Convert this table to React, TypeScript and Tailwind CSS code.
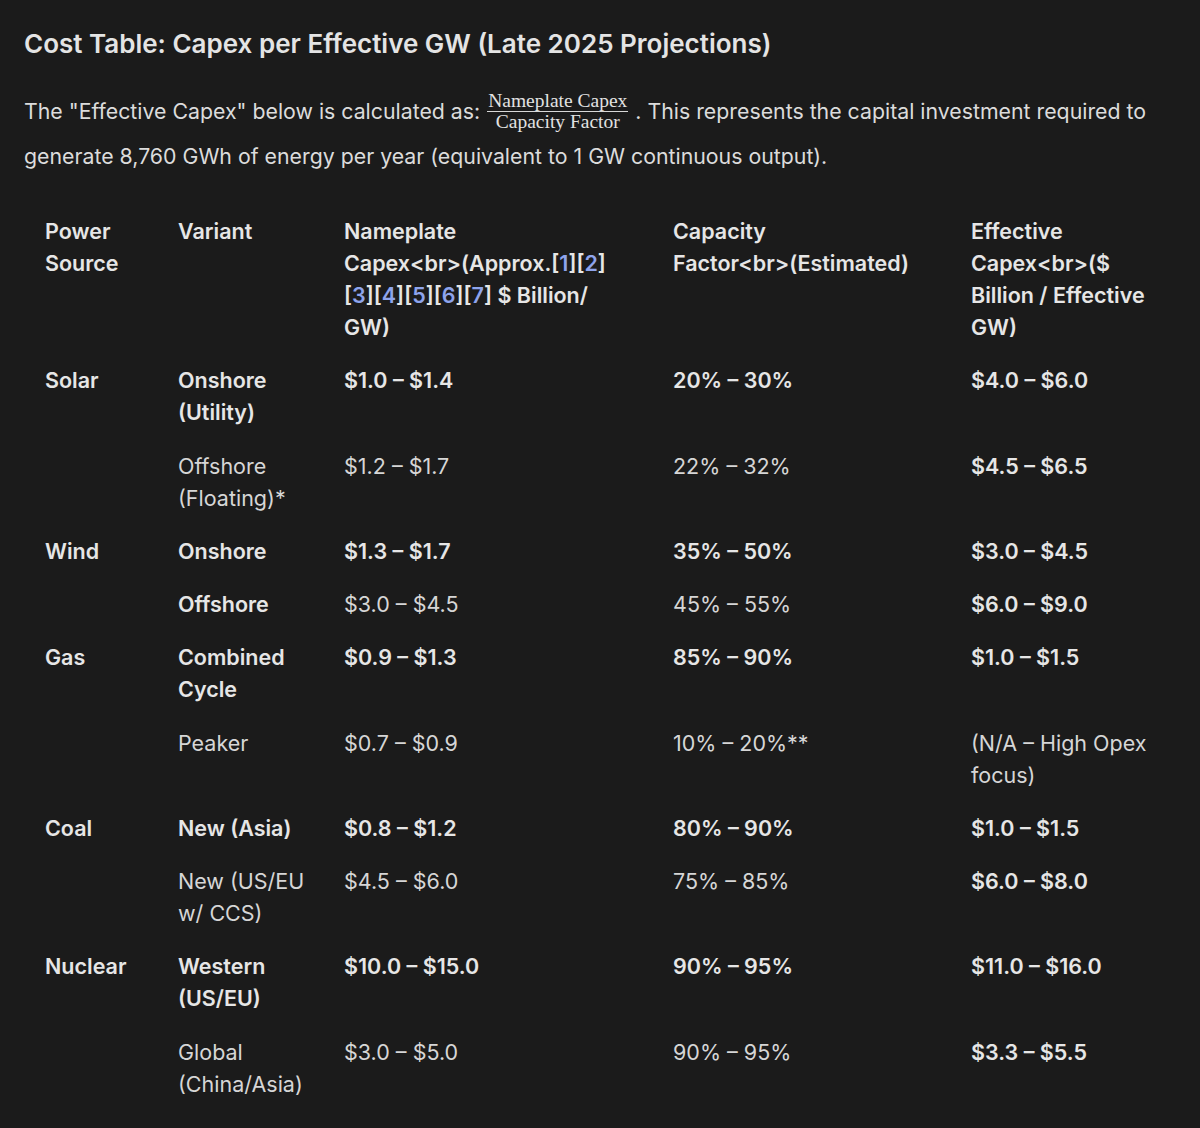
import React from "react";

type Cell = { text: React.ReactNode; bold?: boolean };
type Row = { source?: string; cells: Cell[] };

const rows: Row[] = [
  {
    source: "Solar",
    cells: [
      { text: "Onshore (Utility)", bold: true },
      { text: "$1.0 – $1.4", bold: true },
      { text: "20% – 30%", bold: true },
      { text: "$4.0 – $6.0", bold: true },
    ],
  },
  {
    cells: [
      { text: "Offshore (Floating)*" },
      { text: "$1.2 – $1.7" },
      { text: "22% – 32%" },
      { text: "$4.5 – $6.5", bold: true },
    ],
  },
  {
    source: "Wind",
    cells: [
      { text: "Onshore", bold: true },
      { text: "$1.3 – $1.7", bold: true },
      { text: "35% – 50%", bold: true },
      { text: "$3.0 – $4.5", bold: true },
    ],
  },
  {
    cells: [
      { text: "Offshore", bold: true },
      { text: "$3.0 – $4.5" },
      { text: "45% – 55%" },
      { text: "$6.0 – $9.0", bold: true },
    ],
  },
  {
    source: "Gas",
    cells: [
      { text: "Combined Cycle", bold: true },
      { text: "$0.9 – $1.3", bold: true },
      { text: "85% – 90%", bold: true },
      { text: "$1.0 – $1.5", bold: true },
    ],
  },
  {
    cells: [
      { text: "Peaker" },
      { text: "$0.7 – $0.9" },
      { text: "10% – 20%**" },
      { text: "(N/A – High Opex focus)" },
    ],
  },
  {
    source: "Coal",
    cells: [
      { text: "New (Asia)", bold: true },
      { text: "$0.8 – $1.2", bold: true },
      { text: "80% – 90%", bold: true },
      { text: "$1.0 – $1.5", bold: true },
    ],
  },
  {
    cells: [
      { text: "New (US/EU w/ CCS)" },
      { text: "$4.5 – $6.0" },
      { text: "75% – 85%" },
      { text: "$6.0 – $8.0", bold: true },
    ],
  },
  {
    source: "Nuclear",
    cells: [
      { text: "Western (US/EU)", bold: true },
      { text: "$10.0 – $15.0", bold: true },
      { text: "90% – 95%", bold: true },
      { text: "$11.0 – $16.0", bold: true },
    ],
  },
  {
    cells: [
      { text: "Global (China/Asia)" },
      { text: "$3.0 – $5.0" },
      { text: "90% – 95%" },
      { text: "$3.3 – $5.5", bold: true },
    ],
  },
];

function Ref({ n }: { n: number }) {
  return (
    <>
      [<span className="text-[#8ea4ec]">{n}</span>]
    </>
  );
}

function Fraction() {
  return (
    <span className="mx-[7px] inline-flex -translate-y-[2px] flex-col items-center align-middle font-['Liberation_Serif','DejaVu_Serif',serif] text-[19.5px] leading-[20px] text-[#e2e2e2]">
      <span className="border-b border-[#d8d8d8] px-[1px]">Nameplate Capex</span>
      <span>Capacity Factor</span>
    </span>
  );
}

const td = "pl-[21px] pr-[12px] pt-[10px] pb-[11.25px] align-top";

export default function App() {
  return (
    <div className="min-h-[1128px] bg-[#1b1b1b] px-6 pt-[28px] font-['Inter','Noto_Sans',sans-serif] text-[21.5px] leading-8 text-[#dcdcdc]">
      <h2 className="text-[26px] font-semibold leading-8 text-[#e4e4e4]">
        Cost Table: Capex per Effective GW (Late 2025 Projections)
      </h2>
      <p className="mt-[29px] text-[21.3px] leading-[45px]">
        The "Effective Capex" below is calculated as:
        <Fraction />. This represents the capital investment required to generate 8,760 GWh of energy per year
        (equivalent to 1 GW continuous output).
      </p>
      <table className="mt-[26px] w-full table-fixed border-collapse">
        <colgroup>
          <col className="w-[133px]" />
          <col className="w-[166px]" />
          <col className="w-[329px]" />
          <col className="w-[298px]" />
          <col className="w-[226px]" />
        </colgroup>
        <thead>
          <tr className="text-left text-[#e6e6e6]">
            <th className={`${td} font-semibold`}>
              Power
              <br />
              Source
            </th>
            <th className={`${td} font-semibold`}>Variant</th>
            <th className={`${td} font-semibold whitespace-nowrap`}>
              Nameplate
              <br />
              Capex&lt;br&gt;(Approx.<Ref n={1} />
              <Ref n={2} />
              <br />
              <Ref n={3} />
              <Ref n={4} />
              <Ref n={5} />
              <Ref n={6} />
              <Ref n={7} /> $ Billion/
              <br />
              GW)
            </th>
            <th className={`${td} font-semibold whitespace-nowrap`}>
              Capacity
              <br />
              Factor&lt;br&gt;(Estimated)
            </th>
            <th className={`${td} font-semibold whitespace-nowrap`}>
              Effective
              <br />
              Capex&lt;br&gt;($
              <br />
              Billion / Effective
              <br />
              GW)
            </th>
          </tr>
        </thead>
        <tbody>
          {rows.map((row, i) => (
            <tr key={i}>
              <td className={`${td} font-semibold text-[#e6e6e6]`}>{row.source ?? ""}</td>
              {row.cells.map((c, j) => (
                <td key={j} className={`${td} ${c.bold ? "font-semibold text-[#e6e6e6]" : "text-[#d6d6d6]"}`}>
                  {c.text}
                </td>
              ))}
            </tr>
          ))}
        </tbody>
      </table>
    </div>
  );
}
